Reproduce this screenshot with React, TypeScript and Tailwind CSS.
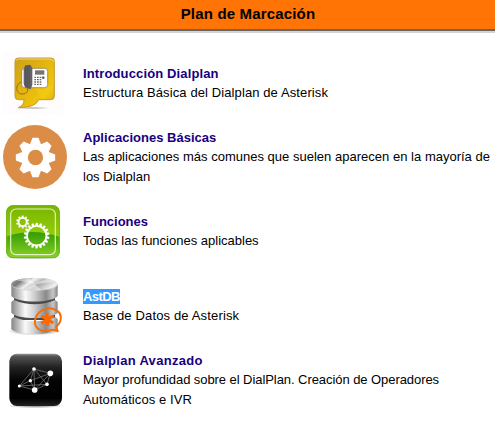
import React from 'react';

function PhoneIcon() {
  return (
    <svg viewBox="0 0 225 225" className="h-[75px] w-[75px] shrink-0">
      <defs>
        <linearGradient id="bubble" x1="0" y1="0" x2="1" y2="1">
          <stop offset="0" stopColor="#cda21c" />
          <stop offset=".35" stopColor="#dfb010" />
          <stop offset=".75" stopColor="#f0c50c" />
          <stop offset="1" stopColor="#c39a16" />
        </linearGradient>
        <radialGradient id="bubbleShadow">
          <stop offset="0" stopColor="#aaa" />
          <stop offset="1" stopColor="#fffcfd" />
        </radialGradient>
      </defs>
      <rect x="9" y="19" width="182" height="190" fill="#fffcfd" />
      <ellipse cx="98" cy="189" rx="54" ry="4" fill="url(#bubbleShadow)" />
      <path d="M55 39H153Q163 39 163 49V154Q163 164 153 164H116Q107 188 55 188Q73 180 72 164H55Q45 164 45 154V49Q45 39 55 39Z" fill="url(#bubble)" stroke="#c29c32" strokeWidth="3" />
      <path d="M48 47Q49 42 56 42H152Q160 43 160 50" fill="none" stroke="#ecd47f" strokeWidth="3" />
      <path d="M103 128L126 161H151Q160 160 160 150V119Z" fill="#f7d51c" opacity=".3" />
      <path d="M78 112C45 103 42 147 66 147C84 147 89 132 76 125" fill="none" stroke="#9a7411" strokeWidth="3" />
      <rect x="65" y="70" width="78" height="58" rx="9" fill="#fff" stroke="#806d3c" strokeWidth="2" />
      <path d="M76 61L91 59L97 70V120L92 133L75 127L71 116V72Z" fill="#626167" />
      <path d="M77 63V127M82 62V129M87 62V130" stroke="#45444a" strokeWidth="1.5" />
      <rect x="105" y="76" width="28" height="13" fill="#77736d" />
      <path d="M103 97H132M103 104H125M103 111H125M103 118H125" stroke="#6c655d" strokeWidth="4" strokeDasharray="5 3" />
      <circle cx="130" cy="98" r="3.5" fill="#514d4a" />
    </svg>
  );
}

function SettingsIcon() {
  return (
    <svg viewBox="0 0 225 225" className="h-[75px] w-[75px] shrink-0">
      <circle cx="105" cy="111" r="96" fill="#db8d47" />
      <g transform="translate(106.500 112.500)" fill="#fff">
        <circle r="43" />
        {[0, 45, 90, 135, 180, 225, 270, 315].map((angle) => (
          <path key={angle} d="M-17 -38L-9 -59H9L17 -38Z" transform={`rotate(${angle})`} />
        ))}
        <circle r="23" fill="#db8d47" />
      </g>
    </svg>
  );
}

function FunctionsIcon() {
  const teeth = (count: number, d: string) =>
    Array.from({ length: count }, (_, i) => (
      <path key={i} d={d} transform={`rotate(${(i * 360) / count})`} />
    ));
  return (
    <svg viewBox="0 0 225 225" className="h-[75px] w-[75px] shrink-0">
      <defs>
        <linearGradient id="green" x1="0" y1="0" x2="0" y2="1">
          <stop offset="0" stopColor="#79b500" />
          <stop offset=".55" stopColor="#94cc0c" />
          <stop offset="1" stopColor="#65ad06" />
        </linearGradient>
        <linearGradient id="greenLow" x1="0" y1="0" x2="0" y2="1">
          <stop offset="0" stopColor="#339d00" />
          <stop offset="1" stopColor="#8bd12a" />
        </linearGradient>
        <radialGradient id="greenShadow">
          <stop offset="0" stopColor="#aaa" />
          <stop offset="1" stopColor="#fff" />
        </radialGradient>
      </defs>
      <ellipse cx="99" cy="187" rx="94" ry="7" fill="url(#greenShadow)" />
      <rect x="19" y="31" width="160" height="158" rx="20" fill="url(#green)" />
      <path d="M19 125Q96 97 179 126V169Q179 189 159 189H39Q19 189 19 169Z" fill="url(#greenLow)" />
      <rect x="20" y="32" width="158" height="156" rx="19" fill="none" stroke="#73b315" strokeWidth="3" />
      <rect x="32" y="42" width="134" height="137" rx="16" fill="none" stroke="#e0f5bb" strokeWidth="3.5" />
      <g transform="translate(68 81)" fill="#fff" stroke="#fff">
        {teeth(10, 'M-3 -12L-2 -19H2L3 -12Z')}
        <circle r="12" fill="none" strokeWidth="5" />
      </g>
      <g transform="translate(110 122)" fill="#fff" stroke="#fff">
        {teeth(18, 'M-4 -30L-2 -38H3L4 -30Z')}
        <circle r="29" fill="none" strokeWidth="5" />
      </g>
    </svg>
  );
}

function DatabaseIcon() {
  return (
    <svg viewBox="0 0 225 225" className="h-[75px] w-[75px] shrink-0">
      <defs>
        <linearGradient id="metal">
          <stop offset="0" stopColor="#858585" />
          <stop offset=".13" stopColor="#b8b8b8" />
          <stop offset=".3" stopColor="#fafafa" />
          <stop offset=".48" stopColor="#d3d3d3" />
          <stop offset=".75" stopColor="#898989" />
          <stop offset=".9" stopColor="#c7c7c7" />
          <stop offset="1" stopColor="#858585" />
        </linearGradient>
        <linearGradient id="top" x1="0" y1="0" x2="1" y2=".35">
          <stop offset="0" stopColor="#b2b2b2" />
          <stop offset=".26" stopColor="#777" />
          <stop offset=".47" stopColor="#f1f1f1" />
          <stop offset=".7" stopColor="#aaa" />
          <stop offset="1" stopColor="#eee" />
        </linearGradient>
        <radialGradient id="baseShadow">
          <stop offset="0" stopColor="#777" />
          <stop offset="1" stopColor="#fff" />
        </radialGradient>
      </defs>
      <ellipse cx="104" cy="184" rx="81" ry="12" fill="url(#baseShadow)" />
      <path d="M42 76H165V150H42Z" fill="#4b4b4b" />
      <path d="M34 148Q36 143 42 141Q104 167 165 141Q171 143 173 148V178C157 197 50 197 34 178Z" fill="url(#metal)" />
      <path d="M34 97Q36 92 42 90Q104 116 165 90Q171 92 173 97V128C157 149 50 149 34 128Z" fill="url(#metal)" />
      <path d="M34 43H173V78C157 100 50 100 34 78Z" fill="url(#metal)" />
      <ellipse cx="103.500" cy="42" rx="69.500" ry="19" fill="url(#top)" />
      <path d="M104 42L50 31Q72 22 87 24ZM104 42L140 26Q159 29 166 35ZM104 42L124 60Q97 64 76 57Z" fill="#fff" opacity=".48" />
      <path d="M35 45Q43 61 103 61Q163 61 173 45" fill="none" stroke="#d5d5d5" strokeWidth="2" />
      <path d="M168 171C188 154 187 129 167 120C145 108 117 120 108 141C96 170 120 193 157 179L173 183Z" fill="none" stroke="#f36f0c" strokeWidth="6" strokeLinejoin="round" />
      <path d="M141 128L143 168M124 138L160 159M160 137L124 160" fill="none" stroke="#ff6700" strokeWidth="9" />
    </svg>
  );
}

function NetworkIcon() {
  return (
    <svg viewBox="0 0 225 225" className="h-[75px] w-[75px] shrink-0">
      <defs>
        <linearGradient id="black" x1="0" y1="0" x2="0" y2="1">
          <stop offset="0" stopColor="#999" />
          <stop offset=".05" stopColor="#555" />
          <stop offset=".25" stopColor="#232323" />
          <stop offset=".5" stopColor="#050505" />
          <stop offset=".85" stopColor="#000" />
          <stop offset="1" stopColor="#222" />
        </linearGradient>
        <radialGradient id="tileShadow">
          <stop offset="0" stopColor="#777" />
          <stop offset="1" stopColor="#fff" />
        </radialGradient>
      </defs>
      <ellipse cx="106" cy="182" rx="85" ry="8" fill="url(#tileShadow)" />
      <rect x="28" y="26" width="158" height="157" rx="23" fill="url(#black)" />
      <path d="M58 123L102 72L151 85L141 118L104 135L58 123L91 107L102 72L104 135L151 85L91 107L104 135M102 72L141 118L58 123" fill="none" stroke="#858585" strokeWidth="2" />
      <g fill="#fff">
        <circle cx="102" cy="72" r="5.500" />
        <circle cx="151" cy="85" r="8.500" />
        <circle cx="91" cy="107" r="5" />
        <circle cx="58" cy="123" r="4.500" />
        <circle cx="141" cy="118" r="5.500" />
        <circle cx="104" cy="135" r="8.500" />
      </g>
    </svg>
  );
}

const sections = [
  { icon: PhoneIcon, title: 'Introducción Dialplan', text: 'Estructura Básica del Dialplan de Asterisk', pad: 'pt-5', color: 'text-[#190080] tracking-[0.13px]', body: 'tracking-[0.105px]' },
  { icon: SettingsIcon, title: 'Aplicaciones Básicas', text: 'Las aplicaciones más comunes que suelen aparecen en la mayoría de los Dialplan', pad: 'pt-[9px]', color: 'text-[#190080] tracking-[0.02px]', body: 'text-justify' },
  { icon: FunctionsIcon, title: 'Funciones', text: 'Todas las funciones aplicables', pad: 'pt-[18px]', color: 'text-[#190080]', body: '' },
  { icon: DatabaseIcon, title: 'AstDB', text: 'Base de Datos de Asterisk', pad: 'pt-[18px]', color: 'bg-[#3399ff] text-white tracking-[-0.6px]', body: 'tracking-[0.15px]' },
  { icon: NetworkIcon, title: 'Dialplan Avanzado', text: 'Mayor profundidad sobre el DialPlan. Creación de Operadores Automáticos e IVR', pad: 'pt-[7px]', color: 'text-[#190080] tracking-[0.3px]', body: 'tracking-[0.08px] first-line:tracking-[-0.065px]' },
];

export default function App() {
  return (
    <main className="h-[433px] w-[495px] overflow-hidden bg-white font-['Liberation_Sans',Arial,sans-serif] text-black">
      <header className="h-[33px] border-b-2 border-[#d3d3d3]">
        <h1 className="h-[31px] border-b-2 border-[#666] bg-[#ff7405] pl-px text-center text-[15px] leading-[28px] font-bold tracking-[0.17px]">Plan de Marcación</h1>
      </header>
      <div className="flex flex-col pt-3">
        {sections.map(({ icon: Icon, title, text, pad, color, body }) => (
          <section key={title} className="flex h-[75px] gap-2">
            <Icon />
            <div className={`w-[407px] text-[13px] leading-[20px] ${pad}`}>
              <h2 className="mb-px leading-[17px] font-bold"><span className={color}>{title}</span></h2>
              <p className={body}>{text}</p>
            </div>
          </section>
        ))}
      </div>
    </main>
  );
}
